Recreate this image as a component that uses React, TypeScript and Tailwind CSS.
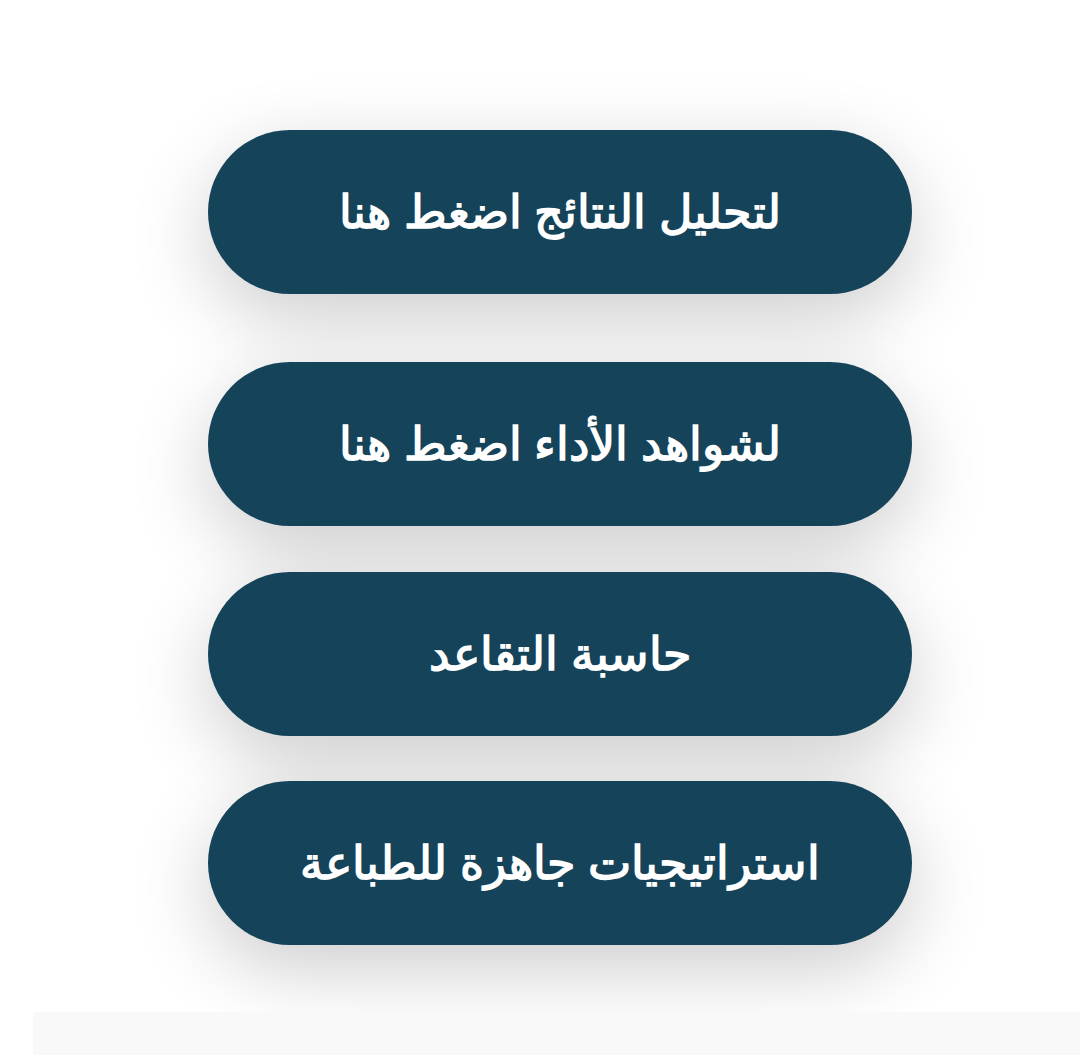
import React from "react";

const BUTTONS = [
  { label: "لتحليل النتائج اضغط هنا", gap: "mt-0" },
  { label: "لشواهد الأداء اضغط هنا", gap: "mt-[68px]" },
  { label: "حاسبة التقاعد", gap: "mt-[46px]" },
  { label: "استراتيجيات جاهزة للطباعة", gap: "mt-[45px]" },
];

export default function App() {
  return (
    <div className="flex h-[1055px] w-[1080px] flex-col overflow-hidden bg-white">
      <div className="flex flex-1 flex-col pt-[130px]">
        {BUTTONS.map((b) => (
          <button
            key={b.label}
            dir="rtl"
            className={`${b.gap} ml-[208px] flex h-[164px] w-[704px] items-center justify-center rounded-full bg-[#15435a] text-[46px] font-bold text-white shadow-[0_24px_80px_rgba(0,0,0,0.2)]`}
            style={{ fontFamily: '"Liberation Sans", sans-serif' }}
          >
            {b.label}
          </button>
        ))}
      </div>
      <div className="ml-[33px] h-[43px] bg-[#f9f9f9]" />
    </div>
  );
}
